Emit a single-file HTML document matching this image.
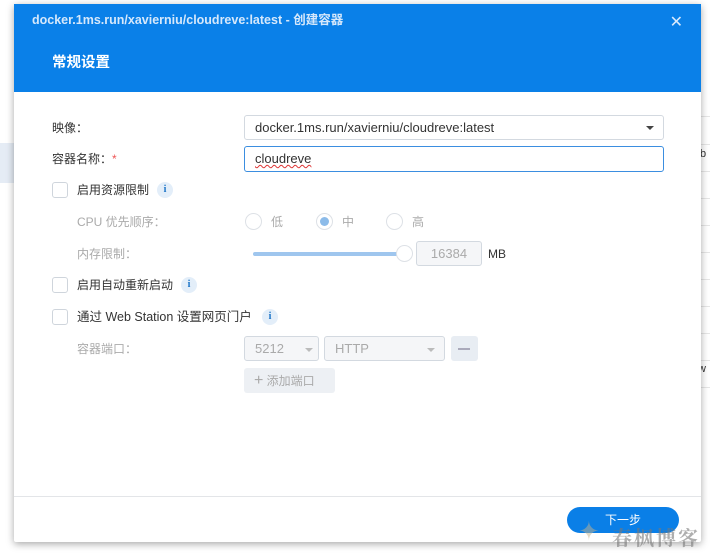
<!DOCTYPE html>
<html><head><meta charset="utf-8"><style>
*{box-sizing:border-box;margin:0;padding:0}
body{width:710px;height:559px;background:#fff;position:relative;overflow:hidden;font-family:"Liberation Sans","Noto Sans CJK SC",sans-serif;font-size:12px;color:#333}
.bgl{position:absolute;left:700px;width:10px;height:1px;background:#e6e6e6}
.dlg{position:absolute;left:14px;top:4px;width:687px;height:538px;background:#fff;box-shadow:0 2px 8px rgba(0,0,0,.35);border-radius:2px}
.hd{position:absolute;left:0;top:0;width:100%;height:88px;background:#0a80e8}
.t1{position:absolute;left:18px;top:8px;color:#d6e8fb;font-size:12.5px;font-weight:bold;line-height:16px}
.x{position:absolute;right:18px;top:8px;color:#dbeafc;font-size:16px}
.t2{position:absolute;left:38px;top:50px;color:#fff;font-size:14.5px;font-weight:bold;line-height:18px}
.abs{position:absolute}
.lbl{position:absolute;font-size:12px;color:#333;line-height:16px}
.gry{color:#aaa}
.inp{position:absolute;border:1px solid #d3d9e0;border-radius:3px;height:25px;background:#fff;font-size:13px;padding:0 10px;line-height:23px;color:#333}
.cb{position:absolute;width:16px;height:16px;border:1px solid #cfd5dc;border-radius:3px;background:#fff}
.info{position:absolute;width:16px;height:16px;border-radius:50%;background:#e3eef9;color:#1a73c7;font-size:10px;font-weight:bold;text-align:center;line-height:16px;font-family:"Liberation Serif",serif}
.rad{position:absolute;width:17px;height:17px;border-radius:50%;border:1px solid #dde1e6;background:#fff}
.car{position:absolute;width:0;height:0;border-left:4px solid transparent;border-right:4px solid transparent;border-top:4px solid #444}
</style></head><body>
<div class="abs" style="left:0;top:143px;width:14px;height:40px;background:#e5ecf5"></div>
<div class="bgl" style="top:116px"></div><div class="bgl" style="top:144px"></div><div class="bgl" style="top:171px"></div><div class="bgl" style="top:198px"></div><div class="bgl" style="top:225px"></div><div class="bgl" style="top:252px"></div><div class="bgl" style="top:279px"></div><div class="bgl" style="top:306px"></div><div class="bgl" style="top:333px"></div><div class="bgl" style="top:360px"></div><div class="bgl" style="top:387px"></div>
<div class="abs" style="left:700px;top:148px;font-size:11px;color:#333">b</div>
<div class="abs" style="left:698px;top:363px;font-size:11px;color:#333">w</div>
<div class="dlg">
<div class="hd"><div class="t1">docker.1ms.run/xavierniu/cloudreve:latest - 创建容器</div><div class="x">✕</div><div class="t2">常规设置</div></div>
<div class="lbl" style="left:38px;top:116px">映像：</div>
<div class="inp" style="left:230px;top:111px;width:420px">docker.1ms.run/xavierniu/cloudreve:latest</div>
<div class="car" style="left:632px;top:122px"></div>
<div class="lbl" style="left:38px;top:147px">容器名称：<span style="color:#e55">*</span></div>
<div class="inp" style="left:230px;top:142px;width:420px;border-color:#3b8ee0;height:26px;line-height:24px"><span style="text-decoration:underline wavy #d33;text-decoration-thickness:1px">cloudreve</span></div>
<div class="cb" style="left:38px;top:178px"></div><div class="lbl" style="left:63px;top:178px">启用资源限制</div><div class="info" style="left:143px;top:178px">i</div>
<div class="lbl gry" style="left:63px;top:210px">CPU 优先顺序：</div>
<div class="rad" style="left:231px;top:209px"></div><div class="lbl gry" style="left:257px;top:210px">低</div>
<div class="rad" style="left:302px;top:209px"><div class="abs" style="left:3px;top:3px;width:9px;height:9px;border-radius:50%;background:#8cbbe9"></div></div><div class="lbl gry" style="left:328px;top:210px">中</div>
<div class="rad" style="left:372px;top:209px"></div><div class="lbl gry" style="left:398px;top:210px">高</div>
<div class="lbl gry" style="left:63px;top:242px">内存限制：</div>
<div class="abs" style="left:239px;top:248px;width:150px;height:4px;background:#9fc6ee;border-radius:2px"></div>
<div class="rad" style="left:382px;top:241px;width:17px;height:17px"></div>
<div class="inp" style="left:402px;top:237px;width:66px;background:#f5f6f8;color:#aaa;text-align:center;padding:0">16384</div>
<div class="lbl" style="left:474px;top:242px">MB</div>
<div class="cb" style="left:38px;top:273px"></div><div class="lbl" style="left:63px;top:273px">启用自动重新启动</div><div class="info" style="left:167px;top:273px">i</div>
<div class="cb" style="left:38px;top:305px"></div><div class="lbl" style="left:63px;top:305px;font-size:12.5px">通过 Web Station 设置网页门户</div><div class="info" style="left:248px;top:305px">i</div>
<div class="lbl gry" style="left:63px;top:337px">容器端口：</div>
<div class="inp" style="left:230px;top:332px;width:75px;background:#f5f6f8;color:#aaa">5212</div><div class="car" style="left:291px;top:344px;border-top-color:#bbb"></div>
<div class="inp" style="left:310px;top:332px;width:121px;background:#f5f6f8;color:#aaa">HTTP</div><div class="car" style="left:413px;top:344px;border-top-color:#bbb"></div>
<div class="abs" style="left:437px;top:332px;width:27px;height:25px;background:#e8edf3;border-radius:3px"><div class="abs" style="left:7px;top:12px;width:12px;height:1.5px;background:#aab"></div></div>
<div class="abs" style="left:230px;top:364px;width:91px;height:25px;background:#edf0f4;border-radius:3px;color:#aaa;font-size:12px;padding-left:10px;line-height:25px"><span style="font-size:16px">+</span> 添加端口</div>
<div class="abs" style="left:0;top:492px;width:100%;height:1px;background:#e3e5e8"></div>
<div class="abs" style="left:553px;top:503px;width:112px;height:26px;background:#0a7fe7;border-radius:13px;color:#fff;text-align:center;line-height:26px;font-size:12px">下一步</div>
</div>
<div class="abs" style="left:612px;top:524px;font-size:20px;line-height:26px;font-weight:bold;color:rgba(120,120,120,.6);font-family:'Noto Serif CJK SC',serif;letter-spacing:2px">春枫博客</div>
<div class="abs" style="left:578px;top:516px;width:26px;height:30px;color:rgba(200,180,140,.5);font-size:26px">✦</div>
</body></html>
